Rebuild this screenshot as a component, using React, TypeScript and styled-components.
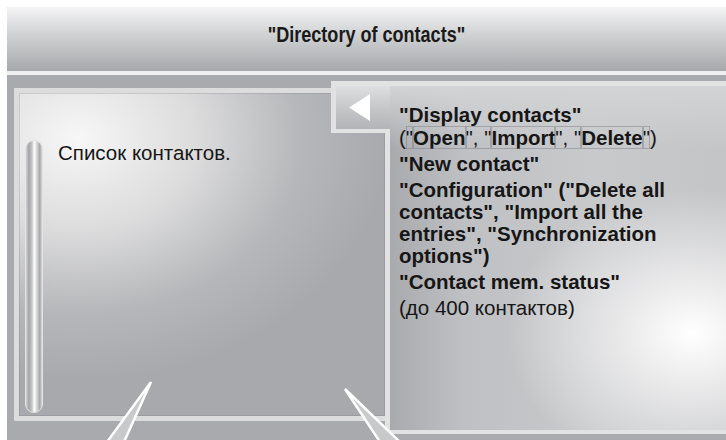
import React from 'react';
import styled, { createGlobalStyle } from 'styled-components';

const GlobalStyle = createGlobalStyle`
  html, body {
    margin: 0;
    padding: 0;
    background: #ffffff;
  }
`;

const Page = styled.div`
  position: relative;
  width: 726px;
  height: 440px;
  overflow: hidden;
  box-sizing: border-box;
  padding: 7px 0 0 7px;
  display: flex;
  flex-direction: column;
  background: #ffffff;
  font-family: 'Liberation Sans', Arial, sans-serif;
  color: #1b1b1b;
`;

const Header = styled.div`
  height: 64px;
  flex-shrink: 0;
  display: flex;
  align-items: center;
  justify-content: center;
  padding-bottom: 8px;
  box-sizing: border-box;
  background: linear-gradient(180deg, #f4f4f5 0%, #d3d4d6 40%, #a7a8ab 100%);
`;

const Title = styled.div`
  font-size: 22px;
  line-height: 22px;
  font-weight: 700;
  transform: scaleX(0.82);
  color: #1a1a1a;
`;

const Separator = styled.div`
  height: 4px;
  flex-shrink: 0;
  background: #efeff0;
`;

const Main = styled.div`
  flex: 1;
  display: grid;
  grid-template-columns: 7px 317px 59px 1fr;
  align-items: start;
  background: #a9aaad;
`;

const LeftPanel = styled.div`
  grid-column: 2 / 4;
  grid-row: 1;
  margin-top: 13px;
  height: 333px;
  box-sizing: border-box;
  border: 5px solid #dcdcdd;
  box-shadow: inset 0 0 0 1px rgba(120, 120, 124, 0.25);
  padding: 47px 0 3px 6px;
  display: flex;
  background: radial-gradient(
    ellipse 85% 75% at 16% 14%,
    #f7f7f7 0%,
    #dcdcdd 38%,
    #b6b7ba 72%,
    #a8a9ac 100%
  );
`;

const ScrollTrack = styled.div`
  width: 18px;
  flex-shrink: 0;
  box-sizing: border-box;
  border-radius: 9px;
  border: 1px solid #e4e4e5;
  background: linear-gradient(
    90deg,
    #d4d4d5 0%,
    #a3a4a7 18%,
    #c9c9ca 38%,
    #ffffff 52%,
    #d0d0d1 70%,
    #a5a6a9 86%,
    #d9d9da 100%
  );
`;

const ListText = styled.div`
  margin: 2px 0 0 15px;
  font-size: 20.5px;
  line-height: 22px;
  color: #161616;
`;

const RightPanel = styled.div`
  grid-column: 3 / 5;
  grid-row: 1;
  margin-top: 6px;
  height: 353px;
  display: flex;
  align-items: flex-start;
  position: relative;
  z-index: 1;
`;

const BackTab = styled.div`
  width: 59px;
  height: 52px;
  flex-shrink: 0;
  box-sizing: border-box;
  margin-right: -5px;
  position: relative;
  z-index: 1;
  border: 5px solid #e2e2e3;
  border-right: none;
  border-bottom-width: 4px;
  padding-left: 13px;
  display: flex;
  align-items: center;
  background: linear-gradient(180deg, #dedfe0 0%, #c4c5c7 55%, #b3b4b7 100%);
`;

const Body = styled.div`
  flex: 1;
  align-self: stretch;
  box-sizing: border-box;
  border-top: 5px solid #e2e2e3;
  border-left: 5px solid #e2e2e3;
  border-bottom: 4px solid #e2e2e3;
  padding: 18px 10px 0 9px;
  background:
    radial-gradient(ellipse 55% 42% at 90% 72%, #ffffff 0%, #ebebec 35%, rgba(205, 206, 208, 0) 100%),
    linear-gradient(180deg, #d3d4d6 0%, rgba(200, 201, 203, 0) 18%),
    linear-gradient(90deg, #a9aaad 0%, #bfc0c3 22%, #c8c9cb 60%, #c4c5c7 100%);
`;

const MenuList = styled.div`
  width: 290px;
  display: flex;
  flex-direction: column;
  gap: 4px;
  font-size: 20.5px;
  line-height: 22px;
  color: #161616;
`;

const Item = styled.div<{ regular?: boolean }>`
  font-weight: ${({ regular }) => (regular ? 400 : 700)};
`;

const SubLine = styled.div`
  font-weight: 400;
  margin-top: 1px;
`;

const Boxed = styled.span<{ bold?: boolean }>`
  font-weight: ${({ bold }) => (bold ? 700 : 400)};
  outline: 1px solid rgba(120, 120, 124, 0.45);
  outline-offset: -1px;
`;

const Overlay = styled.svg`
  position: absolute;
  left: 0;
  top: 0;
  pointer-events: none;
  z-index: 5;
`;

const BackArrow = () => (
  <svg width="21" height="27" viewBox="0 0 21 27">
    <polygon points="0,13.5 21,0 21,27" fill="#ffffff" />
  </svg>
);

export default function App() {
  return (
    <Page>
      <GlobalStyle />
      <Header>
        <Title>"Directory of contacts"</Title>
      </Header>
      <Separator />
      <Main>
        <LeftPanel>
          <ScrollTrack />
          <ListText>Список контактов.</ListText>
        </LeftPanel>
        <RightPanel>
          <BackTab>
            <BackArrow />
          </BackTab>
          <Body>
            <MenuList>
              <Item>
                "Display contacts"
                <SubLine>
                  (<Boxed>"</Boxed>
                  <Boxed bold>Open</Boxed>
                  <Boxed>", "</Boxed>
                  <Boxed bold>Import</Boxed>
                  <Boxed>", "</Boxed>
                  <Boxed bold>Delete</Boxed>
                  <Boxed>"</Boxed>)
                </SubLine>
              </Item>
              <Item>"New contact"</Item>
              <Item>
                "Configuration" ("Delete all contacts", "Import all the entries",
                "Synchronization options")
              </Item>
              <Item>"Contact mem. status"</Item>
              <Item regular>(до 400 контактов)</Item>
            </MenuList>
          </Body>
        </RightPanel>
      </Main>
      <Overlay width="726" height="440" viewBox="0 0 726 440">
        <polygon
          points="151,382 107,442 124,442"
          fill="#c8c9cb"
          stroke="#ffffff"
          strokeWidth="2.5"
          strokeLinejoin="miter"
        />
        <polygon
          points="345,389 380,442 400,442"
          fill="#c8c9cb"
          stroke="#ffffff"
          strokeWidth="2.5"
          strokeLinejoin="miter"
        />
      </Overlay>
    </Page>
  );
}
